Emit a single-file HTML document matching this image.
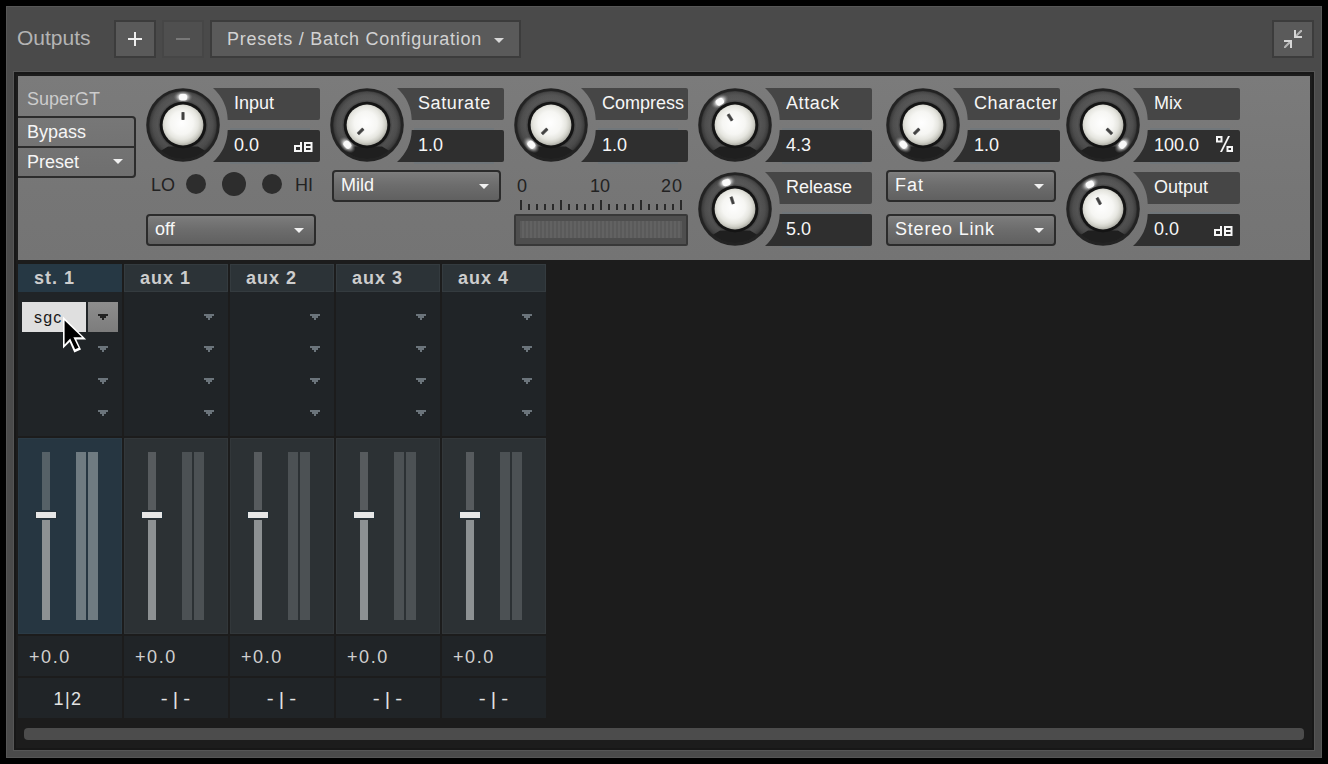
<!DOCTYPE html><html><head><meta charset="utf-8"><style>
html,body{margin:0;padding:0;background:#000;width:1328px;height:764px;overflow:hidden}
*{box-sizing:border-box}
#root{position:relative;width:1328px;height:764px;background:#000;font-family:"Liberation Sans", sans-serif;}
.a{position:absolute}
.txt{position:absolute;white-space:nowrap;line-height:22px;font-size:18px}
.lt{color:#f6f6f6}
.dd{position:absolute;height:32px;border:2px solid #2b2b2b;border-radius:4px;background:linear-gradient(#808080 0,#7a7a7a 2px,#6c6c6c 50%,#606060);color:#f8f8f8;box-shadow:0 0 0 1px rgba(120,120,120,0.35)}
.tri{position:absolute;width:0;height:0;border-left:5px solid transparent;border-right:5px solid transparent;border-top:5px solid #f0f0f0}
.hdr{position:absolute;top:264px;width:104px;height:28px;color:#d4d4d4}
.cell{position:absolute;width:104px;background:#202427}
.atri{position:absolute;width:10px;height:6px}
svg{display:block}
</style></head><body><div id="root">
<div class="a" style="left:6px;top:6px;width:1316px;height:752px;background:#4a4a4a;border:1px solid #565656"></div>
<div class="txt" style="left:17px;top:26px;font-size:21px;line-height:24px;color:#b4b4b4">Outputs</div>
<div class="a" style="left:114px;top:20px;width:42px;height:38px;background:#5a5a5a;border:2px solid #3c3c3c"></div>
<div class="a" style="left:128px;top:38px;width:14px;height:2px;background:#eee"></div><div class="a" style="left:134px;top:32px;width:2px;height:14px;background:#eee"></div>
<div class="a" style="left:162px;top:20px;width:42px;height:38px;background:#4f4f4f;border:2px solid #464646"></div>
<div class="a" style="left:176px;top:38px;width:14px;height:2px;background:#787878"></div>
<div class="a" style="left:210px;top:20px;width:311px;height:38px;background:#5a5a5a;border:2px solid #3c3c3c"></div>
<div class="txt" style="left:227px;top:28px;color:#d2d2d2;letter-spacing:0.72px">Presets / Batch Configuration</div>
<div class="tri" style="left:494px;top:38px;border-top-color:#d8d8d8"></div>
<div class="a" style="left:1272px;top:20px;width:42px;height:38px;background:#5a5a5a;border:2px solid #3c3c3c"></div>
<svg class="a" style="left:1283px;top:29px" width="20" height="20" viewBox="0 0 20 20"><g fill="#d6d6d6"><rect x="11" y="1" width="2" height="8"/><rect x="11" y="7" width="8" height="2"/><path d="M13 5.5 L17.5 1 H19 V2.5 L14.5 7 H13 Z" opacity="0.75"/><rect x="1" y="11" width="8" height="2"/><rect x="7" y="11" width="2" height="8"/><path d="M1 17.5 L5.5 13 H7 V14.5 L2.5 19 H1 Z" opacity="0.75"/></g></svg>
<div class="a" style="left:14px;top:72px;width:1300px;height:678px;background:#1c1c1c;box-shadow:inset 0 0 0 2px #171717,0 0 0 1px #565656"></div>
<div class="a" style="left:18px;top:76px;width:1292px;height:184px;background:linear-gradient(#7b7b7b,#767676 60%,#747474)"></div>
<div class="txt" style="left:27px;top:88px;color:#cccccc">SuperGT</div>
<div class="a" style="left:18px;top:116px;width:118px;height:62px;border:2px solid #2c2c2c;border-left:none;border-radius:0 4px 4px 0;background:linear-gradient(#777,#6f6f6f)"></div>
<div class="a" style="left:18px;top:146px;width:117px;height:2px;background:#2c2c2c"></div>
<div class="txt lt" style="left:27px;top:121px">Bypass</div>
<div class="txt lt" style="left:27px;top:151px">Preset</div>
<div class="tri" style="left:113px;top:159px"></div>
<svg style="position:absolute;left:146px;top:88px" width="74" height="74" viewBox="0 0 74 74">
<defs>
<radialGradient id="rg0" cx="37" cy="37" r="34" gradientUnits="userSpaceOnUse"><stop offset="0.68" stop-color="#444"/><stop offset="0.75" stop-color="#545454"/><stop offset="0.88" stop-color="#4e4e4e"/><stop offset="0.96" stop-color="#404040"/><stop offset="1" stop-color="#303030"/></radialGradient>
<linearGradient id="sh0" x1="0" y1="0" x2="0" y2="1"><stop offset="0" stop-color="#fff" stop-opacity="0.05"/><stop offset="0.5" stop-color="#000" stop-opacity="0"/><stop offset="1" stop-color="#000" stop-opacity="0.1"/></linearGradient>
<radialGradient id="cg0" cx="0.47" cy="0.45" r="0.56"><stop offset="0" stop-color="#ffffff"/><stop offset="0.5" stop-color="#f6f6f3"/><stop offset="0.72" stop-color="#e6e6e0"/><stop offset="0.86" stop-color="#d0d0c8"/><stop offset="1" stop-color="#a8a8a0"/></radialGradient>
<radialGradient id="gl0" cx="0.5" cy="0.5" r="0.5"><stop offset="0" stop-color="#fff" stop-opacity="1"/><stop offset="0.45" stop-color="#e0e0e0" stop-opacity="0.85"/><stop offset="0.75" stop-color="#909090" stop-opacity="0.45"/><stop offset="1" stop-color="#606060" stop-opacity="0"/></radialGradient>
<clipPath id="cp0"><circle cx="37" cy="37" r="34"/></clipPath>
</defs>
<circle cx="37" cy="37" r="36.8" fill="#232323"/>
<circle cx="37" cy="37" r="34" fill="url(#rg0)"/>
<circle cx="37" cy="37" r="34" fill="url(#sh0)"/>
<path d="M22 58.5 L52 58.5 L66 67 L37 80 L8 67 Z" fill="#1f1f1f" clip-path="url(#cp0)"/>
<g transform="rotate(0 37 37)"><ellipse cx="37" cy="9" rx="10" ry="6.5" fill="url(#gl0)"/><rect x="33" y="6" width="8" height="6.5" rx="2.5" fill="#fafafa"/></g>
<circle cx="37" cy="37" r="23.3" fill="#141414"/>
<circle cx="37" cy="37" r="20.4" fill="url(#cg0)"/>
<g transform="rotate(0 37 37)"><rect x="35.3" y="24.2" width="3.4" height="7.6" fill="#707070"/><rect x="36" y="24.2" width="2" height="7.6" fill="#404040"/></g>
</svg>
<svg style="position:absolute;left:213px;top:88px" width="107" height="32" viewBox="0 0 107 32"><path d="M0 0 H105 Q107 0 107 2 V30 Q107 32 105 32 H14.72 A45 45 0 0 0 0 0 Z" fill="#464646"/></svg>
<div class="txt lt" style="left:234px;top:92px;width:83px;overflow:hidden;letter-spacing:0px">Input</div>
<div class="a" style="left:230px;top:128px;width:80px;height:36px;background:#6a757d;opacity:0.5"></div>
<svg style="position:absolute;left:213px;top:130px" width="107" height="32" viewBox="0 0 107 32"><path d="M14.72 0 H105 Q107 0 107 2 V30 Q107 32 105 32 H0 A45 45 0 0 0 14.72 0 Z" fill="#2f2f2f"/></svg>
<div class="txt lt" style="left:234px;top:134px">0.0</div>
<svg class="a" style="left:294px;top:142px" width="19" height="10" viewBox="0 0 19 10"><path d="M6 0h2v10h-8v-7h6zM2 5v3h4v-3z" fill="#f6f6f6" fill-rule="evenodd"/><path d="M10 0h8.5v10h-8.5zM12 2v2h4.5v-2zM12 6v2h4.5v-2z" fill="#f6f6f6" fill-rule="evenodd"/></svg>
<svg style="position:absolute;left:330px;top:88px" width="74" height="74" viewBox="0 0 74 74">
<defs>
<radialGradient id="rg1" cx="37" cy="37" r="34" gradientUnits="userSpaceOnUse"><stop offset="0.68" stop-color="#444"/><stop offset="0.75" stop-color="#545454"/><stop offset="0.88" stop-color="#4e4e4e"/><stop offset="0.96" stop-color="#404040"/><stop offset="1" stop-color="#303030"/></radialGradient>
<linearGradient id="sh1" x1="0" y1="0" x2="0" y2="1"><stop offset="0" stop-color="#fff" stop-opacity="0.05"/><stop offset="0.5" stop-color="#000" stop-opacity="0"/><stop offset="1" stop-color="#000" stop-opacity="0.1"/></linearGradient>
<radialGradient id="cg1" cx="0.47" cy="0.45" r="0.56"><stop offset="0" stop-color="#ffffff"/><stop offset="0.5" stop-color="#f6f6f3"/><stop offset="0.72" stop-color="#e6e6e0"/><stop offset="0.86" stop-color="#d0d0c8"/><stop offset="1" stop-color="#a8a8a0"/></radialGradient>
<radialGradient id="gl1" cx="0.5" cy="0.5" r="0.5"><stop offset="0" stop-color="#fff" stop-opacity="1"/><stop offset="0.45" stop-color="#e0e0e0" stop-opacity="0.85"/><stop offset="0.75" stop-color="#909090" stop-opacity="0.45"/><stop offset="1" stop-color="#606060" stop-opacity="0"/></radialGradient>
<clipPath id="cp1"><circle cx="37" cy="37" r="34"/></clipPath>
</defs>
<circle cx="37" cy="37" r="36.8" fill="#232323"/>
<circle cx="37" cy="37" r="34" fill="url(#rg1)"/>
<circle cx="37" cy="37" r="34" fill="url(#sh1)"/>
<path d="M22 58.5 L52 58.5 L66 67 L37 80 L8 67 Z" fill="#1f1f1f" clip-path="url(#cp1)"/>
<g transform="rotate(-135 37 37)"><ellipse cx="37" cy="9" rx="10" ry="6.5" fill="url(#gl1)"/><rect x="33" y="6" width="8" height="6.5" rx="2.5" fill="#fafafa"/></g>
<circle cx="37" cy="37" r="23.3" fill="#141414"/>
<circle cx="37" cy="37" r="20.4" fill="url(#cg1)"/>
<g transform="rotate(-135 37 37)"><rect x="35.3" y="24.2" width="3.4" height="7.6" fill="#707070"/><rect x="36" y="24.2" width="2" height="7.6" fill="#404040"/></g>
</svg>
<svg style="position:absolute;left:397px;top:88px" width="107" height="32" viewBox="0 0 107 32"><path d="M0 0 H105 Q107 0 107 2 V30 Q107 32 105 32 H14.72 A45 45 0 0 0 0 0 Z" fill="#464646"/></svg>
<div class="txt lt" style="left:418px;top:92px;width:83px;overflow:hidden;letter-spacing:0.6px">Saturate</div>
<div class="a" style="left:414px;top:128px;width:80px;height:36px;background:#6a757d;opacity:0.5"></div>
<svg style="position:absolute;left:397px;top:130px" width="107" height="32" viewBox="0 0 107 32"><path d="M14.72 0 H105 Q107 0 107 2 V30 Q107 32 105 32 H0 A45 45 0 0 0 14.72 0 Z" fill="#2f2f2f"/></svg>
<div class="txt lt" style="left:418px;top:134px">1.0</div>
<svg style="position:absolute;left:514px;top:88px" width="74" height="74" viewBox="0 0 74 74">
<defs>
<radialGradient id="rg2" cx="37" cy="37" r="34" gradientUnits="userSpaceOnUse"><stop offset="0.68" stop-color="#444"/><stop offset="0.75" stop-color="#545454"/><stop offset="0.88" stop-color="#4e4e4e"/><stop offset="0.96" stop-color="#404040"/><stop offset="1" stop-color="#303030"/></radialGradient>
<linearGradient id="sh2" x1="0" y1="0" x2="0" y2="1"><stop offset="0" stop-color="#fff" stop-opacity="0.05"/><stop offset="0.5" stop-color="#000" stop-opacity="0"/><stop offset="1" stop-color="#000" stop-opacity="0.1"/></linearGradient>
<radialGradient id="cg2" cx="0.47" cy="0.45" r="0.56"><stop offset="0" stop-color="#ffffff"/><stop offset="0.5" stop-color="#f6f6f3"/><stop offset="0.72" stop-color="#e6e6e0"/><stop offset="0.86" stop-color="#d0d0c8"/><stop offset="1" stop-color="#a8a8a0"/></radialGradient>
<radialGradient id="gl2" cx="0.5" cy="0.5" r="0.5"><stop offset="0" stop-color="#fff" stop-opacity="1"/><stop offset="0.45" stop-color="#e0e0e0" stop-opacity="0.85"/><stop offset="0.75" stop-color="#909090" stop-opacity="0.45"/><stop offset="1" stop-color="#606060" stop-opacity="0"/></radialGradient>
<clipPath id="cp2"><circle cx="37" cy="37" r="34"/></clipPath>
</defs>
<circle cx="37" cy="37" r="36.8" fill="#232323"/>
<circle cx="37" cy="37" r="34" fill="url(#rg2)"/>
<circle cx="37" cy="37" r="34" fill="url(#sh2)"/>
<path d="M22 58.5 L52 58.5 L66 67 L37 80 L8 67 Z" fill="#1f1f1f" clip-path="url(#cp2)"/>
<g transform="rotate(-135 37 37)"><ellipse cx="37" cy="9" rx="10" ry="6.5" fill="url(#gl2)"/><rect x="33" y="6" width="8" height="6.5" rx="2.5" fill="#fafafa"/></g>
<circle cx="37" cy="37" r="23.3" fill="#141414"/>
<circle cx="37" cy="37" r="20.4" fill="url(#cg2)"/>
<g transform="rotate(-135 37 37)"><rect x="35.3" y="24.2" width="3.4" height="7.6" fill="#707070"/><rect x="36" y="24.2" width="2" height="7.6" fill="#404040"/></g>
</svg>
<svg style="position:absolute;left:581px;top:88px" width="107" height="32" viewBox="0 0 107 32"><path d="M0 0 H105 Q107 0 107 2 V30 Q107 32 105 32 H14.72 A45 45 0 0 0 0 0 Z" fill="#464646"/></svg>
<div class="txt lt" style="left:602px;top:92px;width:83px;overflow:hidden;letter-spacing:0px">Compress</div>
<div class="a" style="left:598px;top:128px;width:80px;height:36px;background:#6a757d;opacity:0.5"></div>
<svg style="position:absolute;left:581px;top:130px" width="107" height="32" viewBox="0 0 107 32"><path d="M14.72 0 H105 Q107 0 107 2 V30 Q107 32 105 32 H0 A45 45 0 0 0 14.72 0 Z" fill="#2f2f2f"/></svg>
<div class="txt lt" style="left:602px;top:134px">1.0</div>
<svg style="position:absolute;left:698px;top:88px" width="74" height="74" viewBox="0 0 74 74">
<defs>
<radialGradient id="rg3" cx="37" cy="37" r="34" gradientUnits="userSpaceOnUse"><stop offset="0.68" stop-color="#444"/><stop offset="0.75" stop-color="#545454"/><stop offset="0.88" stop-color="#4e4e4e"/><stop offset="0.96" stop-color="#404040"/><stop offset="1" stop-color="#303030"/></radialGradient>
<linearGradient id="sh3" x1="0" y1="0" x2="0" y2="1"><stop offset="0" stop-color="#fff" stop-opacity="0.05"/><stop offset="0.5" stop-color="#000" stop-opacity="0"/><stop offset="1" stop-color="#000" stop-opacity="0.1"/></linearGradient>
<radialGradient id="cg3" cx="0.47" cy="0.45" r="0.56"><stop offset="0" stop-color="#ffffff"/><stop offset="0.5" stop-color="#f6f6f3"/><stop offset="0.72" stop-color="#e6e6e0"/><stop offset="0.86" stop-color="#d0d0c8"/><stop offset="1" stop-color="#a8a8a0"/></radialGradient>
<radialGradient id="gl3" cx="0.5" cy="0.5" r="0.5"><stop offset="0" stop-color="#fff" stop-opacity="1"/><stop offset="0.45" stop-color="#e0e0e0" stop-opacity="0.85"/><stop offset="0.75" stop-color="#909090" stop-opacity="0.45"/><stop offset="1" stop-color="#606060" stop-opacity="0"/></radialGradient>
<clipPath id="cp3"><circle cx="37" cy="37" r="34"/></clipPath>
</defs>
<circle cx="37" cy="37" r="36.8" fill="#232323"/>
<circle cx="37" cy="37" r="34" fill="url(#rg3)"/>
<circle cx="37" cy="37" r="34" fill="url(#sh3)"/>
<path d="M22 58.5 L52 58.5 L66 67 L37 80 L8 67 Z" fill="#1f1f1f" clip-path="url(#cp3)"/>
<g transform="rotate(-33 37 37)"><ellipse cx="37" cy="9" rx="10" ry="6.5" fill="url(#gl3)"/><rect x="33" y="6" width="8" height="6.5" rx="2.5" fill="#fafafa"/></g>
<circle cx="37" cy="37" r="23.3" fill="#141414"/>
<circle cx="37" cy="37" r="20.4" fill="url(#cg3)"/>
<g transform="rotate(-33 37 37)"><rect x="35.3" y="24.2" width="3.4" height="7.6" fill="#707070"/><rect x="36" y="24.2" width="2" height="7.6" fill="#404040"/></g>
</svg>
<svg style="position:absolute;left:765px;top:88px" width="107" height="32" viewBox="0 0 107 32"><path d="M0 0 H105 Q107 0 107 2 V30 Q107 32 105 32 H14.72 A45 45 0 0 0 0 0 Z" fill="#464646"/></svg>
<div class="txt lt" style="left:786px;top:92px;width:83px;overflow:hidden;letter-spacing:0.6px">Attack</div>
<div class="a" style="left:782px;top:128px;width:80px;height:36px;background:#6a757d;opacity:0.5"></div>
<svg style="position:absolute;left:765px;top:130px" width="107" height="32" viewBox="0 0 107 32"><path d="M14.72 0 H105 Q107 0 107 2 V30 Q107 32 105 32 H0 A45 45 0 0 0 14.72 0 Z" fill="#2f2f2f"/></svg>
<div class="txt lt" style="left:786px;top:134px">4.3</div>
<svg style="position:absolute;left:886px;top:88px" width="74" height="74" viewBox="0 0 74 74">
<defs>
<radialGradient id="rg4" cx="37" cy="37" r="34" gradientUnits="userSpaceOnUse"><stop offset="0.68" stop-color="#444"/><stop offset="0.75" stop-color="#545454"/><stop offset="0.88" stop-color="#4e4e4e"/><stop offset="0.96" stop-color="#404040"/><stop offset="1" stop-color="#303030"/></radialGradient>
<linearGradient id="sh4" x1="0" y1="0" x2="0" y2="1"><stop offset="0" stop-color="#fff" stop-opacity="0.05"/><stop offset="0.5" stop-color="#000" stop-opacity="0"/><stop offset="1" stop-color="#000" stop-opacity="0.1"/></linearGradient>
<radialGradient id="cg4" cx="0.47" cy="0.45" r="0.56"><stop offset="0" stop-color="#ffffff"/><stop offset="0.5" stop-color="#f6f6f3"/><stop offset="0.72" stop-color="#e6e6e0"/><stop offset="0.86" stop-color="#d0d0c8"/><stop offset="1" stop-color="#a8a8a0"/></radialGradient>
<radialGradient id="gl4" cx="0.5" cy="0.5" r="0.5"><stop offset="0" stop-color="#fff" stop-opacity="1"/><stop offset="0.45" stop-color="#e0e0e0" stop-opacity="0.85"/><stop offset="0.75" stop-color="#909090" stop-opacity="0.45"/><stop offset="1" stop-color="#606060" stop-opacity="0"/></radialGradient>
<clipPath id="cp4"><circle cx="37" cy="37" r="34"/></clipPath>
</defs>
<circle cx="37" cy="37" r="36.8" fill="#232323"/>
<circle cx="37" cy="37" r="34" fill="url(#rg4)"/>
<circle cx="37" cy="37" r="34" fill="url(#sh4)"/>
<path d="M22 58.5 L52 58.5 L66 67 L37 80 L8 67 Z" fill="#1f1f1f" clip-path="url(#cp4)"/>
<g transform="rotate(-135 37 37)"><ellipse cx="37" cy="9" rx="10" ry="6.5" fill="url(#gl4)"/><rect x="33" y="6" width="8" height="6.5" rx="2.5" fill="#fafafa"/></g>
<circle cx="37" cy="37" r="23.3" fill="#141414"/>
<circle cx="37" cy="37" r="20.4" fill="url(#cg4)"/>
<g transform="rotate(-135 37 37)"><rect x="35.3" y="24.2" width="3.4" height="7.6" fill="#707070"/><rect x="36" y="24.2" width="2" height="7.6" fill="#404040"/></g>
</svg>
<svg style="position:absolute;left:953px;top:88px" width="107" height="32" viewBox="0 0 107 32"><path d="M0 0 H105 Q107 0 107 2 V30 Q107 32 105 32 H14.72 A45 45 0 0 0 0 0 Z" fill="#464646"/></svg>
<div class="txt lt" style="left:974px;top:92px;width:83px;overflow:hidden;letter-spacing:0.6px">Character</div>
<div class="a" style="left:970px;top:128px;width:80px;height:36px;background:#6a757d;opacity:0.5"></div>
<svg style="position:absolute;left:953px;top:130px" width="107" height="32" viewBox="0 0 107 32"><path d="M14.72 0 H105 Q107 0 107 2 V30 Q107 32 105 32 H0 A45 45 0 0 0 14.72 0 Z" fill="#2f2f2f"/></svg>
<div class="txt lt" style="left:974px;top:134px">1.0</div>
<svg style="position:absolute;left:1066px;top:88px" width="74" height="74" viewBox="0 0 74 74">
<defs>
<radialGradient id="rg5" cx="37" cy="37" r="34" gradientUnits="userSpaceOnUse"><stop offset="0.68" stop-color="#444"/><stop offset="0.75" stop-color="#545454"/><stop offset="0.88" stop-color="#4e4e4e"/><stop offset="0.96" stop-color="#404040"/><stop offset="1" stop-color="#303030"/></radialGradient>
<linearGradient id="sh5" x1="0" y1="0" x2="0" y2="1"><stop offset="0" stop-color="#fff" stop-opacity="0.05"/><stop offset="0.5" stop-color="#000" stop-opacity="0"/><stop offset="1" stop-color="#000" stop-opacity="0.1"/></linearGradient>
<radialGradient id="cg5" cx="0.47" cy="0.45" r="0.56"><stop offset="0" stop-color="#ffffff"/><stop offset="0.5" stop-color="#f6f6f3"/><stop offset="0.72" stop-color="#e6e6e0"/><stop offset="0.86" stop-color="#d0d0c8"/><stop offset="1" stop-color="#a8a8a0"/></radialGradient>
<radialGradient id="gl5" cx="0.5" cy="0.5" r="0.5"><stop offset="0" stop-color="#fff" stop-opacity="1"/><stop offset="0.45" stop-color="#e0e0e0" stop-opacity="0.85"/><stop offset="0.75" stop-color="#909090" stop-opacity="0.45"/><stop offset="1" stop-color="#606060" stop-opacity="0"/></radialGradient>
<clipPath id="cp5"><circle cx="37" cy="37" r="34"/></clipPath>
</defs>
<circle cx="37" cy="37" r="36.8" fill="#232323"/>
<circle cx="37" cy="37" r="34" fill="url(#rg5)"/>
<circle cx="37" cy="37" r="34" fill="url(#sh5)"/>
<path d="M22 58.5 L52 58.5 L66 67 L37 80 L8 67 Z" fill="#1f1f1f" clip-path="url(#cp5)"/>
<g transform="rotate(135 37 37)"><ellipse cx="37" cy="9" rx="10" ry="6.5" fill="url(#gl5)"/><rect x="33" y="6" width="8" height="6.5" rx="2.5" fill="#fafafa"/></g>
<circle cx="37" cy="37" r="23.3" fill="#141414"/>
<circle cx="37" cy="37" r="20.4" fill="url(#cg5)"/>
<g transform="rotate(135 37 37)"><rect x="35.3" y="24.2" width="3.4" height="7.6" fill="#707070"/><rect x="36" y="24.2" width="2" height="7.6" fill="#404040"/></g>
</svg>
<svg style="position:absolute;left:1133px;top:88px" width="107" height="32" viewBox="0 0 107 32"><path d="M0 0 H105 Q107 0 107 2 V30 Q107 32 105 32 H14.72 A45 45 0 0 0 0 0 Z" fill="#464646"/></svg>
<div class="txt lt" style="left:1154px;top:92px;width:83px;overflow:hidden;letter-spacing:0px">Mix</div>
<div class="a" style="left:1150px;top:128px;width:80px;height:36px;background:#6a757d;opacity:0.5"></div>
<svg style="position:absolute;left:1133px;top:130px" width="107" height="32" viewBox="0 0 107 32"><path d="M14.72 0 H105 Q107 0 107 2 V30 Q107 32 105 32 H0 A45 45 0 0 0 14.72 0 Z" fill="#2f2f2f"/></svg>
<div class="txt lt" style="left:1154px;top:134px">100.0</div>
<svg class="a" style="left:1216px;top:136px" width="17" height="16" viewBox="0 0 17 16"><path d="M0 0h6.5v6.5h-6.5zM2 2v2.5h2.5v-2.5z" fill="#f6f6f6" fill-rule="evenodd"/><path d="M10.5 10h6.5v6h-6.5zM12.5 12v2h2.5v-2z" fill="#f6f6f6" fill-rule="evenodd"/><path d="M12 0h2l-8 16h-2z" fill="#f6f6f6"/></svg>
<svg style="position:absolute;left:698px;top:172px" width="74" height="74" viewBox="0 0 74 74">
<defs>
<radialGradient id="rg10" cx="37" cy="37" r="34" gradientUnits="userSpaceOnUse"><stop offset="0.68" stop-color="#444"/><stop offset="0.75" stop-color="#545454"/><stop offset="0.88" stop-color="#4e4e4e"/><stop offset="0.96" stop-color="#404040"/><stop offset="1" stop-color="#303030"/></radialGradient>
<linearGradient id="sh10" x1="0" y1="0" x2="0" y2="1"><stop offset="0" stop-color="#fff" stop-opacity="0.05"/><stop offset="0.5" stop-color="#000" stop-opacity="0"/><stop offset="1" stop-color="#000" stop-opacity="0.1"/></linearGradient>
<radialGradient id="cg10" cx="0.47" cy="0.45" r="0.56"><stop offset="0" stop-color="#ffffff"/><stop offset="0.5" stop-color="#f6f6f3"/><stop offset="0.72" stop-color="#e6e6e0"/><stop offset="0.86" stop-color="#d0d0c8"/><stop offset="1" stop-color="#a8a8a0"/></radialGradient>
<radialGradient id="gl10" cx="0.5" cy="0.5" r="0.5"><stop offset="0" stop-color="#fff" stop-opacity="1"/><stop offset="0.45" stop-color="#e0e0e0" stop-opacity="0.85"/><stop offset="0.75" stop-color="#909090" stop-opacity="0.45"/><stop offset="1" stop-color="#606060" stop-opacity="0"/></radialGradient>
<clipPath id="cp10"><circle cx="37" cy="37" r="34"/></clipPath>
</defs>
<circle cx="37" cy="37" r="36.8" fill="#232323"/>
<circle cx="37" cy="37" r="34" fill="url(#rg10)"/>
<circle cx="37" cy="37" r="34" fill="url(#sh10)"/>
<path d="M22 58.5 L52 58.5 L66 67 L37 80 L8 67 Z" fill="#1f1f1f" clip-path="url(#cp10)"/>
<g transform="rotate(-18 37 37)"><ellipse cx="37" cy="9" rx="10" ry="6.5" fill="url(#gl10)"/><rect x="33" y="6" width="8" height="6.5" rx="2.5" fill="#fafafa"/></g>
<circle cx="37" cy="37" r="23.3" fill="#141414"/>
<circle cx="37" cy="37" r="20.4" fill="url(#cg10)"/>
<g transform="rotate(-18 37 37)"><rect x="35.3" y="24.2" width="3.4" height="7.6" fill="#707070"/><rect x="36" y="24.2" width="2" height="7.6" fill="#404040"/></g>
</svg>
<svg style="position:absolute;left:765px;top:172px" width="107" height="32" viewBox="0 0 107 32"><path d="M0 0 H105 Q107 0 107 2 V30 Q107 32 105 32 H14.72 A45 45 0 0 0 0 0 Z" fill="#464646"/></svg>
<div class="txt lt" style="left:786px;top:176px;width:83px;overflow:hidden;letter-spacing:0px">Release</div>
<div class="a" style="left:782px;top:212px;width:80px;height:36px;background:#6a757d;opacity:0.5"></div>
<svg style="position:absolute;left:765px;top:214px" width="107" height="32" viewBox="0 0 107 32"><path d="M14.72 0 H105 Q107 0 107 2 V30 Q107 32 105 32 H0 A45 45 0 0 0 14.72 0 Z" fill="#2f2f2f"/></svg>
<div class="txt lt" style="left:786px;top:218px">5.0</div>
<svg style="position:absolute;left:1066px;top:172px" width="74" height="74" viewBox="0 0 74 74">
<defs>
<radialGradient id="rg11" cx="37" cy="37" r="34" gradientUnits="userSpaceOnUse"><stop offset="0.68" stop-color="#444"/><stop offset="0.75" stop-color="#545454"/><stop offset="0.88" stop-color="#4e4e4e"/><stop offset="0.96" stop-color="#404040"/><stop offset="1" stop-color="#303030"/></radialGradient>
<linearGradient id="sh11" x1="0" y1="0" x2="0" y2="1"><stop offset="0" stop-color="#fff" stop-opacity="0.05"/><stop offset="0.5" stop-color="#000" stop-opacity="0"/><stop offset="1" stop-color="#000" stop-opacity="0.1"/></linearGradient>
<radialGradient id="cg11" cx="0.47" cy="0.45" r="0.56"><stop offset="0" stop-color="#ffffff"/><stop offset="0.5" stop-color="#f6f6f3"/><stop offset="0.72" stop-color="#e6e6e0"/><stop offset="0.86" stop-color="#d0d0c8"/><stop offset="1" stop-color="#a8a8a0"/></radialGradient>
<radialGradient id="gl11" cx="0.5" cy="0.5" r="0.5"><stop offset="0" stop-color="#fff" stop-opacity="1"/><stop offset="0.45" stop-color="#e0e0e0" stop-opacity="0.85"/><stop offset="0.75" stop-color="#909090" stop-opacity="0.45"/><stop offset="1" stop-color="#606060" stop-opacity="0"/></radialGradient>
<clipPath id="cp11"><circle cx="37" cy="37" r="34"/></clipPath>
</defs>
<circle cx="37" cy="37" r="36.8" fill="#232323"/>
<circle cx="37" cy="37" r="34" fill="url(#rg11)"/>
<circle cx="37" cy="37" r="34" fill="url(#sh11)"/>
<path d="M22 58.5 L52 58.5 L66 67 L37 80 L8 67 Z" fill="#1f1f1f" clip-path="url(#cp11)"/>
<g transform="rotate(-28 37 37)"><ellipse cx="37" cy="9" rx="10" ry="6.5" fill="url(#gl11)"/><rect x="33" y="6" width="8" height="6.5" rx="2.5" fill="#fafafa"/></g>
<circle cx="37" cy="37" r="23.3" fill="#141414"/>
<circle cx="37" cy="37" r="20.4" fill="url(#cg11)"/>
<g transform="rotate(-28 37 37)"><rect x="35.3" y="24.2" width="3.4" height="7.6" fill="#707070"/><rect x="36" y="24.2" width="2" height="7.6" fill="#404040"/></g>
</svg>
<svg style="position:absolute;left:1133px;top:172px" width="107" height="32" viewBox="0 0 107 32"><path d="M0 0 H105 Q107 0 107 2 V30 Q107 32 105 32 H14.72 A45 45 0 0 0 0 0 Z" fill="#464646"/></svg>
<div class="txt lt" style="left:1154px;top:176px;width:83px;overflow:hidden;letter-spacing:0px">Output</div>
<div class="a" style="left:1150px;top:212px;width:80px;height:36px;background:#6a757d;opacity:0.5"></div>
<svg style="position:absolute;left:1133px;top:214px" width="107" height="32" viewBox="0 0 107 32"><path d="M14.72 0 H105 Q107 0 107 2 V30 Q107 32 105 32 H0 A45 45 0 0 0 14.72 0 Z" fill="#2f2f2f"/></svg>
<div class="txt lt" style="left:1154px;top:218px">0.0</div>
<svg class="a" style="left:1214px;top:226px" width="19" height="10" viewBox="0 0 19 10"><path d="M6 0h2v10h-8v-7h6zM2 5v3h4v-3z" fill="#f6f6f6" fill-rule="evenodd"/><path d="M10 0h8.5v10h-8.5zM12 2v2h4.5v-2zM12 6v2h4.5v-2z" fill="#f6f6f6" fill-rule="evenodd"/></svg>
<div class="txt" style="left:151px;top:174px;font-size:18px;color:#222">LO</div>
<div class="a" style="left:186px;top:174px;width:20px;height:20px;border-radius:50%;background:#2d2d2d"></div>
<div class="a" style="left:222px;top:172px;width:24px;height:24px;border-radius:50%;background:#2d2d2d"></div>
<div class="a" style="left:262px;top:174px;width:20px;height:20px;border-radius:50%;background:#2d2d2d"></div>
<div class="txt" style="left:295px;top:174px;font-size:18px;color:#222">HI</div>
<div class="dd" style="left:146px;top:214px;width:170px"><span class="txt" style="left:7px;top:2px;letter-spacing:0px">off</span><div class="tri" style="right:10px;top:12px"></div></div>
<div class="dd" style="left:332px;top:170px;width:169px"><span class="txt" style="left:7px;top:2px;letter-spacing:0px">Mild</span><div class="tri" style="right:10px;top:12px"></div></div>
<div class="dd" style="left:886px;top:170px;width:170px"><span class="txt" style="left:7px;top:2px;letter-spacing:1px">Fat</span><div class="tri" style="right:10px;top:12px"></div></div>
<div class="dd" style="left:886px;top:214px;width:170px"><span class="txt" style="left:7px;top:2px;letter-spacing:0.8px">Stereo Link</span><div class="tri" style="right:10px;top:12px"></div></div>
<div class="txt" style="left:517px;top:175px;color:#222">0</div>
<div class="txt" style="left:590px;top:175px;color:#222">10</div>
<div class="txt" style="left:661px;top:175px;color:#222;letter-spacing:1px">20</div>
<div class="a" style="left:520px;top:200px;width:2px;height:10px;background:#2a2a2a"></div>
<div class="a" style="left:528px;top:204px;width:2px;height:6px;background:#2a2a2a"></div>
<div class="a" style="left:536px;top:204px;width:2px;height:6px;background:#2a2a2a"></div>
<div class="a" style="left:544px;top:204px;width:2px;height:6px;background:#2a2a2a"></div>
<div class="a" style="left:552px;top:204px;width:2px;height:6px;background:#2a2a2a"></div>
<div class="a" style="left:560px;top:200px;width:2px;height:10px;background:#2a2a2a"></div>
<div class="a" style="left:568px;top:204px;width:2px;height:6px;background:#2a2a2a"></div>
<div class="a" style="left:576px;top:204px;width:2px;height:6px;background:#2a2a2a"></div>
<div class="a" style="left:584px;top:204px;width:2px;height:6px;background:#2a2a2a"></div>
<div class="a" style="left:592px;top:204px;width:2px;height:6px;background:#2a2a2a"></div>
<div class="a" style="left:600px;top:200px;width:2px;height:10px;background:#2a2a2a"></div>
<div class="a" style="left:608px;top:204px;width:2px;height:6px;background:#2a2a2a"></div>
<div class="a" style="left:616px;top:204px;width:2px;height:6px;background:#2a2a2a"></div>
<div class="a" style="left:624px;top:204px;width:2px;height:6px;background:#2a2a2a"></div>
<div class="a" style="left:632px;top:204px;width:2px;height:6px;background:#2a2a2a"></div>
<div class="a" style="left:640px;top:200px;width:2px;height:10px;background:#2a2a2a"></div>
<div class="a" style="left:648px;top:204px;width:2px;height:6px;background:#2a2a2a"></div>
<div class="a" style="left:656px;top:204px;width:2px;height:6px;background:#2a2a2a"></div>
<div class="a" style="left:664px;top:204px;width:2px;height:6px;background:#2a2a2a"></div>
<div class="a" style="left:672px;top:204px;width:2px;height:6px;background:#2a2a2a"></div>
<div class="a" style="left:680px;top:200px;width:2px;height:10px;background:#2a2a2a"></div>
<div class="a" style="left:514px;top:214px;width:174px;height:32px;background:#4e4e4e;border:2px solid #383838;border-radius:2px"></div>
<div class="a" style="left:520px;top:221px;width:162px;height:17px;background:repeating-linear-gradient(90deg,#5a5a5a 0 2px,#626262 2px 4px)"></div>
<div class="hdr" style="left:18px;background:#263844;"><span class="txt" style="left:16px;top:3px;letter-spacing:1px;font-weight:bold;color:#cdcdcd">st. 1</span></div>
<div class="cell" style="left:18px;top:292px;height:144px"></div>
<div class="atri" style="left:98px;top:346px"><svg width="10" height="6" viewBox="0 0 10 6"><path d="M0 0 H10 V2 H8 V4 H6 V6 H4 V4 H2 V2 H0 Z" fill="#6b747b"/></svg></div>
<div class="atri" style="left:98px;top:378px"><svg width="10" height="6" viewBox="0 0 10 6"><path d="M0 0 H10 V2 H8 V4 H6 V6 H4 V4 H2 V2 H0 Z" fill="#6b747b"/></svg></div>
<div class="atri" style="left:98px;top:410px"><svg width="10" height="6" viewBox="0 0 10 6"><path d="M0 0 H10 V2 H8 V4 H6 V6 H4 V4 H2 V2 H0 Z" fill="#6b747b"/></svg></div>
<div class="cell" style="left:18px;top:438px;height:196px;background:#263641;box-shadow:inset 0 0 0 1px #2b3b46"></div>
<div class="a" style="left:42px;top:452px;width:8px;height:58px;background:#566167"></div>
<div class="a" style="left:42px;top:520px;width:8px;height:100px;background:#8d9193"></div>
<div class="a" style="left:76px;top:452px;width:10px;height:168px;background:#6f7b81"></div>
<div class="a" style="left:88px;top:452px;width:10px;height:168px;background:#6f7b81"></div>
<div class="a" style="left:35px;top:511px;width:22px;height:8px;background:#e6e6e6;border:1px solid #253138"></div>
<div class="cell" style="left:18px;top:636px;height:40px"><span class="txt" style="left:11px;top:10px;color:#d0d0d0;letter-spacing:1.6px">+0.0</span></div>
<div class="cell" style="left:18px;top:678px;height:40px"><span class="txt" style="left:-2px;width:104px;text-align:center;top:10px;color:#e2e2e2;letter-spacing:1.5px">1|2</span></div>
<div class="hdr" style="left:124px;background:#2c3337;box-shadow:inset 0 0 0 1px #343b3f"><span class="txt" style="left:16px;top:3px;letter-spacing:1px;font-weight:bold;color:#cdcdcd">aux 1</span></div>
<div class="cell" style="left:124px;top:292px;height:144px"></div>
<div class="atri" style="left:204px;top:314px"><svg width="10" height="6" viewBox="0 0 10 6"><path d="M0 0 H10 V2 H8 V4 H6 V6 H4 V4 H2 V2 H0 Z" fill="#6b747b"/></svg></div>
<div class="atri" style="left:204px;top:346px"><svg width="10" height="6" viewBox="0 0 10 6"><path d="M0 0 H10 V2 H8 V4 H6 V6 H4 V4 H2 V2 H0 Z" fill="#6b747b"/></svg></div>
<div class="atri" style="left:204px;top:378px"><svg width="10" height="6" viewBox="0 0 10 6"><path d="M0 0 H10 V2 H8 V4 H6 V6 H4 V4 H2 V2 H0 Z" fill="#6b747b"/></svg></div>
<div class="atri" style="left:204px;top:410px"><svg width="10" height="6" viewBox="0 0 10 6"><path d="M0 0 H10 V2 H8 V4 H6 V6 H4 V4 H2 V2 H0 Z" fill="#6b747b"/></svg></div>
<div class="cell" style="left:124px;top:438px;height:196px;background:#2c3134;box-shadow:inset 0 0 0 1px #32373a"></div>
<div class="a" style="left:148px;top:452px;width:8px;height:58px;background:#575b5e"></div>
<div class="a" style="left:148px;top:520px;width:8px;height:100px;background:#8d9193"></div>
<div class="a" style="left:182px;top:452px;width:10px;height:168px;background:#4c5154"></div>
<div class="a" style="left:194px;top:452px;width:10px;height:168px;background:#4c5154"></div>
<div class="a" style="left:141px;top:511px;width:22px;height:8px;background:#e6e6e6;border:1px solid #253138"></div>
<div class="cell" style="left:124px;top:636px;height:40px"><span class="txt" style="left:11px;top:10px;color:#d0d0d0;letter-spacing:1.6px">+0.0</span></div>
<div class="cell" style="left:124px;top:678px;height:40px"><span class="txt" style="left:2px;width:104px;text-align:center;top:10px;color:#e2e2e2;letter-spacing:4.5px;transform:scaleX(1.15)">-|-</span></div>
<div class="hdr" style="left:230px;background:#2c3337;box-shadow:inset 0 0 0 1px #343b3f"><span class="txt" style="left:16px;top:3px;letter-spacing:1px;font-weight:bold;color:#cdcdcd">aux 2</span></div>
<div class="cell" style="left:230px;top:292px;height:144px"></div>
<div class="atri" style="left:310px;top:314px"><svg width="10" height="6" viewBox="0 0 10 6"><path d="M0 0 H10 V2 H8 V4 H6 V6 H4 V4 H2 V2 H0 Z" fill="#6b747b"/></svg></div>
<div class="atri" style="left:310px;top:346px"><svg width="10" height="6" viewBox="0 0 10 6"><path d="M0 0 H10 V2 H8 V4 H6 V6 H4 V4 H2 V2 H0 Z" fill="#6b747b"/></svg></div>
<div class="atri" style="left:310px;top:378px"><svg width="10" height="6" viewBox="0 0 10 6"><path d="M0 0 H10 V2 H8 V4 H6 V6 H4 V4 H2 V2 H0 Z" fill="#6b747b"/></svg></div>
<div class="atri" style="left:310px;top:410px"><svg width="10" height="6" viewBox="0 0 10 6"><path d="M0 0 H10 V2 H8 V4 H6 V6 H4 V4 H2 V2 H0 Z" fill="#6b747b"/></svg></div>
<div class="cell" style="left:230px;top:438px;height:196px;background:#2c3134;box-shadow:inset 0 0 0 1px #32373a"></div>
<div class="a" style="left:254px;top:452px;width:8px;height:58px;background:#575b5e"></div>
<div class="a" style="left:254px;top:520px;width:8px;height:100px;background:#8d9193"></div>
<div class="a" style="left:288px;top:452px;width:10px;height:168px;background:#4c5154"></div>
<div class="a" style="left:300px;top:452px;width:10px;height:168px;background:#4c5154"></div>
<div class="a" style="left:247px;top:511px;width:22px;height:8px;background:#e6e6e6;border:1px solid #253138"></div>
<div class="cell" style="left:230px;top:636px;height:40px"><span class="txt" style="left:11px;top:10px;color:#d0d0d0;letter-spacing:1.6px">+0.0</span></div>
<div class="cell" style="left:230px;top:678px;height:40px"><span class="txt" style="left:2px;width:104px;text-align:center;top:10px;color:#e2e2e2;letter-spacing:4.5px;transform:scaleX(1.15)">-|-</span></div>
<div class="hdr" style="left:336px;background:#2c3337;box-shadow:inset 0 0 0 1px #343b3f"><span class="txt" style="left:16px;top:3px;letter-spacing:1px;font-weight:bold;color:#cdcdcd">aux 3</span></div>
<div class="cell" style="left:336px;top:292px;height:144px"></div>
<div class="atri" style="left:416px;top:314px"><svg width="10" height="6" viewBox="0 0 10 6"><path d="M0 0 H10 V2 H8 V4 H6 V6 H4 V4 H2 V2 H0 Z" fill="#6b747b"/></svg></div>
<div class="atri" style="left:416px;top:346px"><svg width="10" height="6" viewBox="0 0 10 6"><path d="M0 0 H10 V2 H8 V4 H6 V6 H4 V4 H2 V2 H0 Z" fill="#6b747b"/></svg></div>
<div class="atri" style="left:416px;top:378px"><svg width="10" height="6" viewBox="0 0 10 6"><path d="M0 0 H10 V2 H8 V4 H6 V6 H4 V4 H2 V2 H0 Z" fill="#6b747b"/></svg></div>
<div class="atri" style="left:416px;top:410px"><svg width="10" height="6" viewBox="0 0 10 6"><path d="M0 0 H10 V2 H8 V4 H6 V6 H4 V4 H2 V2 H0 Z" fill="#6b747b"/></svg></div>
<div class="cell" style="left:336px;top:438px;height:196px;background:#2c3134;box-shadow:inset 0 0 0 1px #32373a"></div>
<div class="a" style="left:360px;top:452px;width:8px;height:58px;background:#575b5e"></div>
<div class="a" style="left:360px;top:520px;width:8px;height:100px;background:#8d9193"></div>
<div class="a" style="left:394px;top:452px;width:10px;height:168px;background:#4c5154"></div>
<div class="a" style="left:406px;top:452px;width:10px;height:168px;background:#4c5154"></div>
<div class="a" style="left:353px;top:511px;width:22px;height:8px;background:#e6e6e6;border:1px solid #253138"></div>
<div class="cell" style="left:336px;top:636px;height:40px"><span class="txt" style="left:11px;top:10px;color:#d0d0d0;letter-spacing:1.6px">+0.0</span></div>
<div class="cell" style="left:336px;top:678px;height:40px"><span class="txt" style="left:2px;width:104px;text-align:center;top:10px;color:#e2e2e2;letter-spacing:4.5px;transform:scaleX(1.15)">-|-</span></div>
<div class="hdr" style="left:442px;background:#2c3337;box-shadow:inset 0 0 0 1px #343b3f"><span class="txt" style="left:16px;top:3px;letter-spacing:1px;font-weight:bold;color:#cdcdcd">aux 4</span></div>
<div class="cell" style="left:442px;top:292px;height:144px"></div>
<div class="atri" style="left:522px;top:314px"><svg width="10" height="6" viewBox="0 0 10 6"><path d="M0 0 H10 V2 H8 V4 H6 V6 H4 V4 H2 V2 H0 Z" fill="#6b747b"/></svg></div>
<div class="atri" style="left:522px;top:346px"><svg width="10" height="6" viewBox="0 0 10 6"><path d="M0 0 H10 V2 H8 V4 H6 V6 H4 V4 H2 V2 H0 Z" fill="#6b747b"/></svg></div>
<div class="atri" style="left:522px;top:378px"><svg width="10" height="6" viewBox="0 0 10 6"><path d="M0 0 H10 V2 H8 V4 H6 V6 H4 V4 H2 V2 H0 Z" fill="#6b747b"/></svg></div>
<div class="atri" style="left:522px;top:410px"><svg width="10" height="6" viewBox="0 0 10 6"><path d="M0 0 H10 V2 H8 V4 H6 V6 H4 V4 H2 V2 H0 Z" fill="#6b747b"/></svg></div>
<div class="cell" style="left:442px;top:438px;height:196px;background:#2c3134;box-shadow:inset 0 0 0 1px #32373a"></div>
<div class="a" style="left:466px;top:452px;width:8px;height:58px;background:#575b5e"></div>
<div class="a" style="left:466px;top:520px;width:8px;height:100px;background:#8d9193"></div>
<div class="a" style="left:500px;top:452px;width:10px;height:168px;background:#4c5154"></div>
<div class="a" style="left:512px;top:452px;width:10px;height:168px;background:#4c5154"></div>
<div class="a" style="left:459px;top:511px;width:22px;height:8px;background:#e6e6e6;border:1px solid #253138"></div>
<div class="cell" style="left:442px;top:636px;height:40px"><span class="txt" style="left:11px;top:10px;color:#d0d0d0;letter-spacing:1.6px">+0.0</span></div>
<div class="cell" style="left:442px;top:678px;height:40px"><span class="txt" style="left:2px;width:104px;text-align:center;top:10px;color:#e2e2e2;letter-spacing:4.5px;transform:scaleX(1.15)">-|-</span></div>
<div class="a" style="left:22px;top:302px;width:64px;height:30px;background:#dfdfdf"></div>
<div class="txt" style="left:34px;top:307px;font-size:16px;color:#181818;letter-spacing:1.2px">sgc</div>
<div class="a" style="left:88px;top:302px;width:30px;height:30px;background:linear-gradient(#8e8e8e,#7c7c7c)"></div>
<div class="a" style="left:98px;top:314px"><svg width="10" height="6" viewBox="0 0 10 6"><path d="M0 0 H10 V2 H8 V4 H6 V6 H4 V4 H2 V2 H0 Z" fill="#222"/></svg></div>
<svg class="a" style="left:58px;top:312px" width="32" height="44" viewBox="0 0 32 44"><path d="M5.0 4.5 L5.0 36.5 L11.7 30.0 L16.3 40.5 L23.0 37.6 L18.3 27.4 L28.2 27.4 Z" fill="#fff"/><path d="M6.6 8.6 L6.6 32.6 L12.2 26.6 L17.1 37.3 L20.6 35.8 L15.4 25.3 L24.0 25.3 Z" fill="#000"/></svg>
<div class="a" style="left:24px;top:728px;width:1280px;height:12px;border-radius:4px;background:#4c4c4c"></div>
</div></body></html>
